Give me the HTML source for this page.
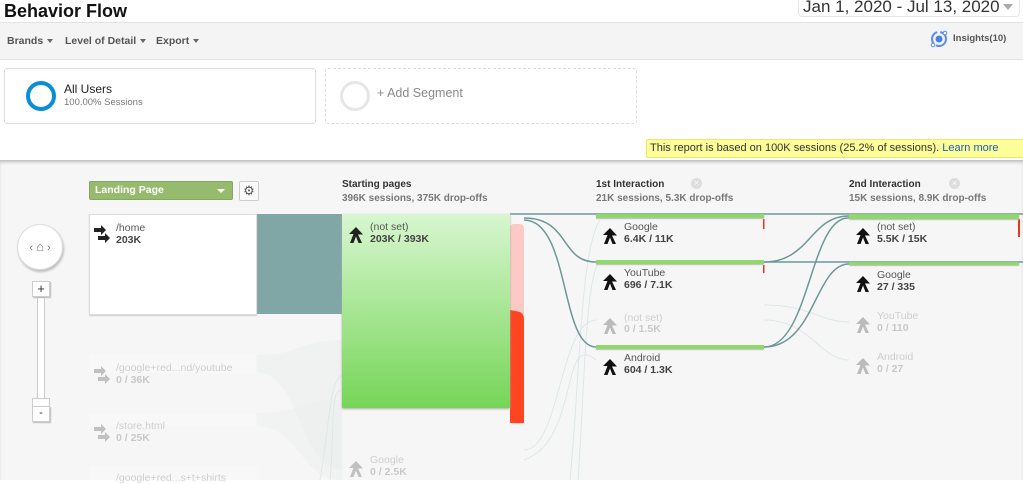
<!DOCTYPE html>
<html><head><meta charset="utf-8"><style>
*{margin:0;padding:0;box-sizing:border-box}
body{width:1023px;height:480px;overflow:hidden;background:#fff;font-family:"Liberation Sans",Arial,sans-serif;position:relative}
.a{position:absolute;white-space:nowrap}
.tb{font-size:10.5px;font-weight:bold;color:#555}
.car{display:inline-block;width:0;height:0;border-left:3.5px solid transparent;border-right:3.5px solid transparent;border-top:4px solid #666;vertical-align:middle;margin-left:4px}
.hd{font-size:10px;font-weight:bold;color:#333}
.sub{font-size:10px;font-weight:bold;color:#777}
.nm{font-size:10.5px;color:#555}
.vl{font-size:10.5px;font-weight:bold;color:#444}
.fd{opacity:.25}
.bar{position:absolute;height:4px;background:#8fd96c;box-shadow:0 1px 1px #bbb}
</style></head><body>
<div class="a" style="left:4px;top:1px;font-size:18px;font-weight:bold;color:#111">Behavior Flow</div>
<div class="a" style="left:798px;top:-4px;width:222px;height:21px;border:1px solid #e6e6e6;border-top:none;border-radius:0 0 4px 4px;background:#fff"></div>
<div class="a" style="left:803px;top:-3px;font-size:17px;color:#333">Jan 1, 2020 - Jul 13, 2020</div>
<div class="a" style="left:1003px;top:4px;border-left:5px solid transparent;border-right:5px solid transparent;border-top:6px solid #aaa"></div>
<div class="a" style="left:0;top:22px;width:1023px;height:38px;background:#f4f4f4;border-top:1px solid #e2e2e2;border-bottom:1px solid #e2e2e2"></div>
<div class="a tb" style="left:7px;top:35px">Brands<span class="car"></span></div>
<div class="a tb" style="left:65px;top:35px">Level of Detail<span class="car"></span></div>
<div class="a tb" style="left:156px;top:35px">Export<span class="car"></span></div>
<svg class="a" style="left:929px;top:29px" width="20" height="20" viewBox="0 0 20 20"><circle cx="10" cy="10" r="7" fill="none" stroke="#5b8def" stroke-width="2" stroke-dasharray="14 3"/><circle cx="10" cy="10" r="3.5" fill="#4a7fe8"/><circle cx="16" cy="4" r="1.8" fill="#fff" stroke="#5b8def"/><circle cx="4" cy="16" r="1.8" fill="#fff" stroke="#5b8def"/></svg>
<div class="a" style="left:953px;top:33px;font-size:9.5px;font-weight:bold;color:#555">Insights(10)</div>

<div class="a" style="left:4px;top:68px;width:312px;height:56px;border:1px solid #ddd;border-radius:3px"></div>
<div class="a" style="left:26px;top:81px;width:30px;height:30px;border:4px solid #0b8ed6;border-radius:50%"></div>
<div class="a" style="left:64px;top:82px;font-size:12px;color:#222">All Users</div>
<div class="a" style="left:64px;top:97px;font-size:9.5px;color:#777">100.00% Sessions</div>
<div class="a" style="left:325px;top:68px;width:312px;height:56px;border:1px dashed #ddd;border-radius:3px"></div>
<div class="a" style="left:340px;top:81px;width:30px;height:30px;border:3px solid #e6e6e6;border-radius:50%"></div>
<div class="a" style="left:377px;top:86px;font-size:12.5px;color:#888">+ Add Segment</div>

<div class="a" style="left:646px;top:139px;width:390px;height:19px;background:#fdfd9a;border:1px solid #e9e96a;border-radius:2px"></div>
<div class="a" style="left:650px;top:142px;font-size:11px;color:#333">This report is based on 100K sessions (25.2% of sessions). <span style="color:#1a5fb4">Learn more</span></div>

<div class="a" style="left:0;top:160px;width:1023px;height:320px;background:#f6f6f6;box-shadow:inset 0 3px 3px -1px #bbb"></div>

<svg class="a" style="left:0;top:160px" width="1023" height="320" viewBox="0 160 1023 320">
<g fill="#eceeee">
<path d="M256 355 C300 355 300 340 342 340 V470 C300 470 300 372 256 372Z" opacity=".6"/>
<path d="M256 413 C300 413 300 400 342 400 V480 C300 480 300 426 256 426Z" opacity=".5"/>
</g>
<path d="M256 214 H342 V314 H256Z" fill="#80a6a6"/>
<g fill="none" stroke="#dce8e8" stroke-width="1">
<path d="M330 480 C335 420 330 390 342 390"/><path d="M320 480 C330 420 330 380 342 375"/>
<path d="M524 450 C560 450 560 320 596 320"/><path d="M524 460 C580 440 560 330 596 360"/>
<path d="M570 480 C580 380 580 250 600 220"/><path d="M578 480 C585 380 585 280 600 260"/>
<path d="M764 305 C810 305 820 322 849 322"/><path d="M764 320 C810 320 820 360 849 360"/>
</g>
<g fill="none" stroke="#6d9898" stroke-width="1.5">
<path d="M510 214 H1023"/>
<path d="M524 218 C570 218 560 262 596 262"/>
<path d="M524 220 C570 220 560 347 596 347"/>
<path d="M764 262 C810 262 810 216 849 216"/>
<path d="M764 347 C810 347 810 216 849 218"/>
<path d="M764 347 C815 347 815 264 849 264"/>
<path d="M764 262 H1023"/>
</g>
<rect x="510" y="224" width="14" height="200" rx="4" fill="#fbcac4"/>
<path d="M510 310 Q510 310 520 312 Q524 314 524 320 V423 H510Z" fill="#ff4422"/>
<g fill="#ee3322"><rect x="763" y="219" width="1.5" height="10"/><rect x="763" y="265" width="1.5" height="8"/><rect x="1018" y="219" width="2" height="18"/></g>
</svg>

<div class="a" style="left:89px;top:181px;width:144px;height:19px;background:#97bb6e;border:1px solid #84a85e;border-radius:2px"></div>
<div class="a" style="left:95px;top:184px;font-size:10.5px;font-weight:bold;color:#fff">Landing Page</div>
<div class="a" style="left:217px;top:189px;border-left:4px solid transparent;border-right:4px solid transparent;border-top:4px solid #fff"></div>
<div class="a" style="left:239px;top:181px;width:20px;height:20px;border:1px solid #ccc;background:#fafafa;border-radius:2px;font-size:13px;color:#555;text-align:center;line-height:18px">⚙</div>

<div class="a hd" style="left:342px;top:179px">Starting pages</div>
<div class="a sub" style="left:342px;top:193px">396K sessions, 375K drop-offs</div>
<div class="a hd" style="left:596px;top:179px">1st Interaction</div>
<div class="a sub" style="left:596px;top:193px">21K sessions, 5.3K drop-offs</div>
<div class="a hd" style="left:849px;top:179px">2nd Interaction</div>
<div class="a sub" style="left:849px;top:193px">15K sessions, 8.9K drop-offs</div>
<div class="a" style="left:691px;top:178px;width:11px;height:11px;border-radius:50%;background:#ddd;color:#fff;font-size:9px;text-align:center;line-height:11px">×</div>
<div class="a" style="left:949px;top:178px;width:11px;height:11px;border-radius:50%;background:#ddd;color:#fff;font-size:9px;text-align:center;line-height:11px">×</div>

<div class="a" style="left:17px;top:224px;width:46px;height:46px;border-radius:50%;background:#fff;border:1px solid #ddd;box-shadow:1px 2px 2px #bbb;text-align:center;line-height:44px;font-size:11px;color:#777">‹ <span style="font-size:13px">⌂</span> ›</div>
<div class="a" style="left:37px;top:297px;width:8px;height:104px;background:#fff;border:1px solid #ccc"></div>
<div class="a" style="left:32px;top:281px;width:18px;height:16px;background:#fff;border:1px solid #ccc;box-shadow:1px 1px 1px #bbb;text-align:center;font-size:13px;line-height:14px;color:#333">+</div>
<div class="a" style="left:32px;top:398px;width:18px;height:9px;background:#fff;border:1px solid #ccc"></div>
<div class="a" style="left:32px;top:406px;width:18px;height:16px;background:#fff;border:1px solid #ccc;box-shadow:1px 1px 1px #bbb;text-align:center;font-size:11px;line-height:13px;color:#333">-</div>

<div class="a" style="left:89px;top:214px;width:168px;height:101px;background:#fff;border:1px solid #ddd;box-shadow:0 1px 1px #ccc"></div>
<svg class="a" style="left:94px;top:224px" width="18" height="20" viewBox="0 0 18 20"><g fill="#222"><path d="M0 4h7V1l5 5-5 5V8H0z"/><path d="M4 12h7V9l5 5-5 5v-3H4z"/></g></svg>
<div class="a nm" style="left:116px;top:222px">/home</div>
<div class="a vl" style="left:116px;top:234px">203K</div>

<div class="fd">
<div class="a" style="left:89px;top:355px;width:168px;height:18px;background:#fff"></div>
<svg class="a" style="left:94px;top:365px" width="18" height="20" viewBox="0 0 18 20"><g fill="#222"><path d="M0 4h7V1l5 5-5 5V8H0z"/><path d="M4 12h7V9l5 5-5 5v-3H4z"/></g></svg>
<div class="a nm" style="left:116px;top:362px">/google+red...nd/youtube</div>
<div class="a vl" style="left:116px;top:374px">0 / 36K</div>
<div class="a" style="left:89px;top:413px;width:168px;height:14px;background:#fff"></div>
<svg class="a" style="left:94px;top:423px" width="18" height="20" viewBox="0 0 18 20"><g fill="#222"><path d="M0 4h7V1l5 5-5 5V8H0z"/><path d="M4 12h7V9l5 5-5 5v-3H4z"/></g></svg>
<div class="a nm" style="left:116px;top:420px">/store.html</div>
<div class="a vl" style="left:116px;top:432px">0 / 25K</div>
<div class="a" style="left:89px;top:466px;width:168px;height:14px;background:#fff"></div>
<div class="a nm" style="left:116px;top:472px">/google+red...s+t+shirts</div>
</div>

<div class="a" style="left:342px;top:214px;width:168px;height:194px;background:linear-gradient(#d8f6d0,#76d558);box-shadow:0 1px 2px #aaa;border-radius:1px"></div>
<svg class="a" style="left:348px;top:227px" width="16" height="17" viewBox="0 0 16 17"><path d="M8 0L1 7h4.5L2 16h3.5L8 9.5 10.5 16H14l-4-8.5h5z" fill="#222"/></svg>
<div class="a nm" style="left:370px;top:221px">(not set)</div>
<div class="a vl" style="left:370px;top:233px">203K / 393K</div>
<div class="fd">
<svg class="a" style="left:348px;top:461px" width="16" height="17" viewBox="0 0 16 17"><path d="M8 0L1 7h4.5L2 16h3.5L8 9.5 10.5 16H14l-4-8.5h5z" fill="#222"/></svg>
<div class="a nm" style="left:370px;top:454px">Google</div>
<div class="a vl" style="left:370px;top:466px">0 / 2.5K</div>
</div>

<div class="bar" style="left:596px;top:214px;width:168px"></div>
<div class="bar" style="left:596px;top:260px;width:168px"></div>
<div class="bar" style="left:596px;top:345px;width:168px"></div>
<svg class="a" style="left:602px;top:228px" width="16" height="17" viewBox="0 0 16 17"><path d="M8 0L1 7h4.5L2 16h3.5L8 9.5 10.5 16H14l-4-8.5h5z" fill="#111"/></svg>
<div class="a nm" style="left:624px;top:221px">Google</div>
<div class="a vl" style="left:624px;top:233px">6.4K / 11K</div>
<svg class="a" style="left:602px;top:274px" width="16" height="17" viewBox="0 0 16 17"><path d="M8 0L1 7h4.5L2 16h3.5L8 9.5 10.5 16H14l-4-8.5h5z" fill="#111"/></svg>
<div class="a nm" style="left:624px;top:267px">YouTube</div>
<div class="a vl" style="left:624px;top:279px">696 / 7.1K</div>
<div class="fd">
<svg class="a" style="left:602px;top:318px" width="16" height="17" viewBox="0 0 16 17"><path d="M8 0L1 7h4.5L2 16h3.5L8 9.5 10.5 16H14l-4-8.5h5z" fill="#111"/></svg>
<div class="a nm" style="left:624px;top:312px">(not set)</div>
<div class="a vl" style="left:624px;top:323px">0 / 1.5K</div>
</div>
<svg class="a" style="left:602px;top:359px" width="16" height="17" viewBox="0 0 16 17"><path d="M8 0L1 7h4.5L2 16h3.5L8 9.5 10.5 16H14l-4-8.5h5z" fill="#111"/></svg>
<div class="a nm" style="left:624px;top:352px">Android</div>
<div class="a vl" style="left:624px;top:364px">604 / 1.3K</div>

<div class="bar" style="left:849px;top:214px;width:170px;height:5px"></div>
<div class="bar" style="left:849px;top:262px;width:170px;height:3px"></div>
<svg class="a" style="left:855px;top:228px" width="16" height="17" viewBox="0 0 16 17"><path d="M8 0L1 7h4.5L2 16h3.5L8 9.5 10.5 16H14l-4-8.5h5z" fill="#111"/></svg>
<div class="a nm" style="left:877px;top:221px">(not set)</div>
<div class="a vl" style="left:877px;top:233px">5.5K / 15K</div>
<svg class="a" style="left:855px;top:276px" width="16" height="17" viewBox="0 0 16 17"><path d="M8 0L1 7h4.5L2 16h3.5L8 9.5 10.5 16H14l-4-8.5h5z" fill="#111"/></svg>
<div class="a nm" style="left:877px;top:269px">Google</div>
<div class="a vl" style="left:877px;top:281px">27 / 335</div>
<div class="fd">
<svg class="a" style="left:855px;top:317px" width="16" height="17" viewBox="0 0 16 17"><path d="M8 0L1 7h4.5L2 16h3.5L8 9.5 10.5 16H14l-4-8.5h5z" fill="#111"/></svg>
<div class="a nm" style="left:877px;top:310px">YouTube</div>
<div class="a vl" style="left:877px;top:322px">0 / 110</div>
<svg class="a" style="left:855px;top:358px" width="16" height="17" viewBox="0 0 16 17"><path d="M8 0L1 7h4.5L2 16h3.5L8 9.5 10.5 16H14l-4-8.5h5z" fill="#111"/></svg>
<div class="a nm" style="left:877px;top:351px">Android</div>
<div class="a vl" style="left:877px;top:363px">0 / 27</div>
</div>
</body></html>
